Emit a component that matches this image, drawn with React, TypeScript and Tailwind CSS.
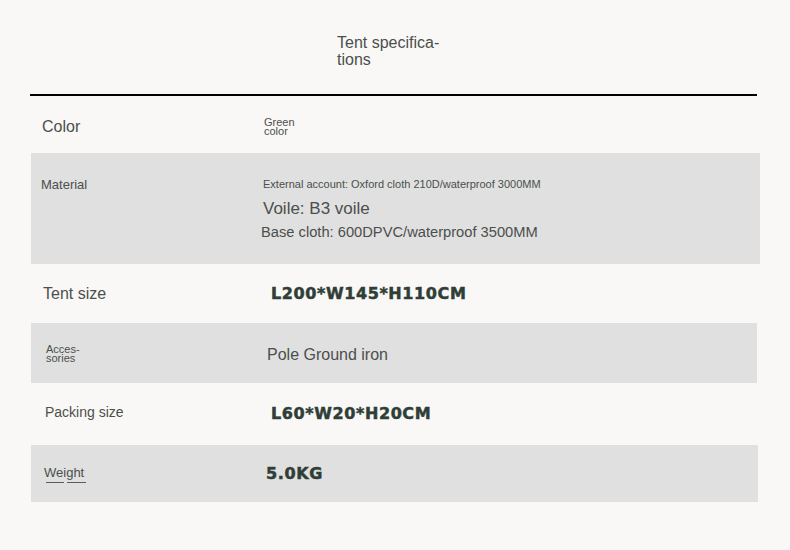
export default function App() {
  const bold =
    "font-['DejaVu_Sans',sans-serif] font-bold text-[16px] tracking-[0.6px] text-[#2f3e36] [-webkit-text-stroke:0.5px_#2f3e36]";
  return (
    <div className="min-h-[550px] w-[790px] bg-[#f9f8f6] font-['Liberation_Sans',Arial,sans-serif] text-[#4b4f4c]">
      <div className="pl-[337px] pt-[34px] text-[16px] leading-[17px]">
        Tent specifica-
        <br />
        tions
      </div>
      <div className="ml-[30px] mt-[26px] h-[2px] w-[727px] bg-black" />

      {/* Color */}
      <div className="ml-[31px] flex h-[57px] items-center pt-[4px]">
        <div className="w-[233px] pl-[11px] text-[16px] leading-[20px]">Color</div>
        <div className="text-[11px] leading-[9px]">
          Green
          <br />
          color
        </div>
      </div>

      {/* Material */}
      <div className="ml-[31px] flex h-[111px] w-[729px] items-start bg-[#e0e0e0] pt-[24px]">
        <div className="w-[232px] pl-[10px] text-[13px] leading-[15px]">Material</div>
        <div className="flex flex-col">
          <div className="text-[11px] leading-[15px]">External account: Oxford cloth 210D/waterproof 3000MM</div>
          <div className="mt-[7px] text-[17px] leading-[20px]">Voile: B3 voile</div>
          <div className="-ml-[2px] mt-[4px] text-[14.7px] leading-[18px]">Base cloth: 600DPVC/waterproof 3500MM</div>
        </div>
      </div>

      {/* Tent size */}
      <div className="ml-[31px] flex h-[59px] items-center">
        <div className="w-[240px] pl-[12px] text-[16px] leading-[20px]">Tent size</div>
        <div className={bold + " mt-[1px]"}>L200*W145*H110CM</div>
      </div>

      {/* Accessories */}
      <div className="ml-[31px] flex h-[60px] w-[726px] items-center bg-[#e0e0e0] pt-[2px]">
        <div className="w-[236px] pl-[15px] text-[11px] leading-[9px]">
          Acces-
          <br />
          sories
        </div>
        <div className="pt-[1px] text-[16px] leading-[20px]">Pole Ground iron</div>
      </div>

      {/* Packing size */}
      <div className="ml-[31px] flex h-[62px] items-center pb-[4px]">
        <div className="w-[240px] pl-[14px] text-[14px] leading-[18px]">Packing size</div>
        <div className={bold + " mt-[3px]"}>L60*W20*H20CM</div>
      </div>

      {/* Weight */}
      <div className="ml-[31px] flex h-[57px] w-[727px] items-center bg-[#e0e0e0]">
        <div className="w-[235px] pl-[13px] pt-[1px]">
          <div className="text-[13px] leading-[15px]">Weight</div>
          <div className="mt-[2px] flex gap-[3px] pl-[2px]">
            <span className="block h-px w-[18px] bg-[#5a5e5b]" />
            <span className="block h-px w-[19px] bg-[#5a5e5b]" />
          </div>
        </div>
        <div className={bold}>5.0KG</div>
      </div>
    </div>
  );
}
